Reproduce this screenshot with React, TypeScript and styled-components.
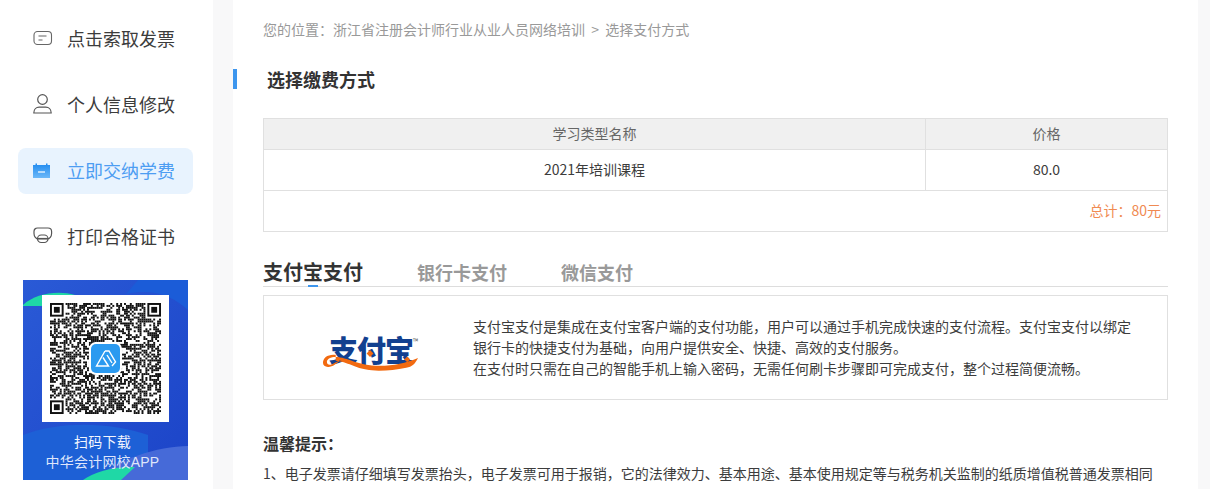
import React from "react";
import styled, { createGlobalStyle } from "styled-components";

const GlobalStyle = createGlobalStyle`
  html, body {
    margin: 0;
    padding: 0;
    height: 489px;
    overflow: hidden;
    background: #f8f8f9;
    font-family: "Noto Sans CJK SC", "Liberation Sans", sans-serif;
    color: #333;
  }
  * { box-sizing: border-box; }
`;

// pseudo random modules for the qr code, fixed seed so it stays the same
const QR_SIZE = 57;
const inFinder = (x: number, y: number) =>
  (x < 8 && y < 8) || (x >= QR_SIZE - 8 && y < 8) || (x < 8 && y >= QR_SIZE - 8);
const qrCells: [number, number][] = [];
let seed = 20211;
for (let y = 0; y < QR_SIZE; y++) {
  for (let x = 0; x < QR_SIZE; x++) {
    seed = (seed * 1103515245 + 12345) & 0x7fffffff;
    if (!inFinder(x, y) && (seed >> 16) % 100 < 56) qrCells.push([x, y]);
  }
}

const InvoiceIcon = () => (
  <svg width="20" height="16" viewBox="0 0 20 16" fill="none" stroke="#666" strokeWidth="1.1">
    <rect x="1" y="1.5" width="17.5" height="13" rx="3.5" />
    <path d="M5.5 6h8M5.5 10h4" />
  </svg>
);

const UserIcon = () => (
  <svg width="20" height="20" viewBox="0 0 20 20" fill="none" stroke="#555" strokeWidth="1.2">
    <circle cx="9.5" cy="5.500" r="4.800" />
    <path d="M0.800 19c0-3.800 2.600-5.800 5.400-5.800h6.600c2.800 0 5.400 2 5.400 5.800z" />
  </svg>
);

const PayIcon = () => (
  <svg width="20" height="18" viewBox="0 0 20 18">
    <defs>
      <linearGradient id="payFill" x1="0" y1="0" x2="0" y2="1">
        <stop offset="0" stopColor="#1f8af0" />
        <stop offset="1" stopColor="#6cb8f8" />
      </linearGradient>
    </defs>
    <path d="M0 4h2.500V2.500h1.500V4h9V2.500h1.500V4H17v13H0z" fill="url(#payFill)" />
    <path d="M5 11h7" stroke="#fff" strokeWidth="1.2" />
  </svg>
);

const CertIcon = () => (
  <svg width="20" height="18" viewBox="0 0 20 18" fill="none" stroke="#555" strokeWidth="1.2">
    <path d="M4.500 1h10.500c2 0 3.600 1.500 3.600 3.500v2c0 3-2 5.500-4.500 5.500H5.500C3 12 1 9.500 1 6.500v-2C1 2.500 2.500 1 4.500 1z" />
    <rect x="4.500" y="8" width="10.500" height="7.500" rx="3.700" />
    <path d="M4.700 11.500h10" />
  </svg>
);

const NAV = [
  { label: "点击索取发票", icon: <InvoiceIcon /> },
  { label: "个人信息修改", icon: <UserIcon /> },
  { label: "立即交纳学费", icon: <PayIcon />, active: true },
  { label: "打印合格证书", icon: <CertIcon /> },
];

export default function App() {
  return (
    <>
      <GlobalStyle />
      <Page>
        <Sidebar>
          {NAV.map((item) => (
            <NavItem key={item.label} $active={item.active}>
              <NavIcon>{item.icon}</NavIcon>
              {item.label}
            </NavItem>
          ))}
          <Banner>
            <BannerArt viewBox="0 0 165 200" preserveAspectRatio="none">
              <defs>
                <linearGradient id="bannerBg" x1="0" y1="0" x2="1" y2="1">
                  <stop offset="0" stopColor="#2a5ad6" />
                  <stop offset="1" stopColor="#1c44c8" />
                </linearGradient>
              </defs>
              <rect width="165" height="200" fill="url(#bannerBg)" />
              <path d="M115 0h50v30c-15-14-35-22-62-16z" fill="#1b5cd8" />
              <path d="M0 25C12 14 34 10 52 15L40 26H0z" fill="#1fd8a6" />
              <path d="M0 155c40-15 90-12 125 0v45H0z" fill="#1d60d6" />
              <path d="M165 166c-30 0-72 14-95 34h95z" fill="#466ad8" />
              <path d="M60 200c10-8 32-14 52-13l-14 13z" fill="#1fd8a6" />
            </BannerArt>
            <QrCard>
              <QrCode viewBox={`0 0 ${QR_SIZE} ${QR_SIZE}`}>
                {qrCells.map(([x, y]) => (
                  <rect key={`${x}-${y}`} x={x} y={y} width="1" height="1" fill="#111" />
                ))}
                {[
                  [0, 0],
                  [QR_SIZE - 7, 0],
                  [0, QR_SIZE - 7],
                ].map(([x, y]) => (
                  <g key={`${x}-${y}`}>
                    <rect x={x} y={y} width="7" height="7" fill="#111" />
                    <rect x={x + 1} y={y + 1} width="5" height="5" fill="#fff" />
                    <rect x={x + 2} y={y + 2} width="3" height="3" fill="#111" />
                  </g>
                ))}
              </QrCode>
              <QrLogo>
                <svg width="22" height="20" viewBox="0 0 22 20" fill="none" stroke="#fff" strokeWidth="1.4">
                  <path d="M10 2L1.500 17h12L8 8.500" />
                  <path d="M10 2h4l6.500 11-3.500 4" />
                  <path d="M12 6l5 8" />
                </svg>
              </QrLogo>
            </QrCard>
            <BannerText>
              <BannerTitle>扫码下载</BannerTitle>
              <span>中华会计网校APP</span>
            </BannerText>
          </Banner>
        </Sidebar>

        <Main>
          <Breadcrumb>您的位置：浙江省注册会计师行业从业人员网络培训&nbsp;&nbsp;&gt;&nbsp;&nbsp;选择支付方式</Breadcrumb>
          <Title>选择缴费方式</Title>

          <FeeTable>
            <thead>
              <tr>
                <HeadCell>学习类型名称</HeadCell>
                <HeadCell $price>价格</HeadCell>
              </tr>
            </thead>
            <tbody>
              <tr>
                <BodyCell>2021年培训课程</BodyCell>
                <BodyCell $price>80.0</BodyCell>
              </tr>
              <tr>
                <TotalCell colSpan={2}>总计：80元</TotalCell>
              </tr>
            </tbody>
          </FeeTable>

          <Tabs>
            <Tab $active>支付宝支付</Tab>
            <Tab>银行卡支付</Tab>
            <Tab>微信支付</Tab>
          </Tabs>

          <PayBox>
            <LogoWrap>
              <LogoText>支付宝</LogoText>
              <LogoTm>™</LogoTm>
              <LogoSwoosh viewBox="0 0 100 40">
                <path d="M49 16l3.500 3.500-3.500 3.500-3.500-3.500z" fill="#f26a10" />
                <path d="M87 22.500l3 3-3 3-3-3z" fill="#f26a10" />
                <path
                  d="M14 21C6 20 1 24 1 29c0 3 3 5 7 4 5-1 8-5 12-7-5 1-9 5-12 5-2 0-3-1-3-3 0-3 4-5 9-5 12 0 22 9 45 9 14 0 27-3 39-8-3 6-6 9-12 10-10 2-18 3-28 3-20 0-26-6-38-9-2 0-4-1-6-1z"
                  fill="#f26a10"
                />
              </LogoSwoosh>
            </LogoWrap>
            <PayText>
              <p>支付宝支付是集成在支付宝客户端的支付功能，用户可以通过手机完成快速的支付流程。支付宝支付以绑定银行卡的快捷支付为基础，向用户提供安全、快捷、高效的支付服务。</p>
              <p>在支付时只需在自己的智能手机上输入密码，无需任何刷卡步骤即可完成支付，整个过程简便流畅。</p>
            </PayText>
          </PayBox>

          <TipTitle>温馨提示：</TipTitle>
          <TipLine>1、电子发票请仔细填写发票抬头，电子发票可用于报销，它的法律效力、基本用途、基本使用规定等与税务机关监制的纸质增值税普通发票相同</TipLine>
        </Main>
      </Page>
    </>
  );
}

const Page = styled.div`
  display: flex;
  width: 1210px;
  height: 489px;
  overflow: hidden;
`;

const Sidebar = styled.aside`
  flex: 0 0 213px;
  height: 489px;
  padding: 16px 20px 0 18px;
  background: #fff;
  display: flex;
  flex-direction: column;
  gap: 20px;
`;

const NavItem = styled.div<{ $active?: boolean }>`
  flex: 0 0 46px;
  width: 175px;
  display: flex;
  align-items: center;
  padding: 0 0 2px 15px;
  font-size: 18px;
  border-radius: 8px;
  color: ${({ $active }) => ($active ? "#4d9df2" : "#3c3c3c")};
  background: ${({ $active }) => ($active ? "#e8f3fe" : "transparent")};
`;

const NavIcon = styled.span`
  display: flex;
  width: 34px;
  align-items: center;
`;

const Banner = styled.div`
  position: relative;
  width: 165px;
  height: 200px;
  margin-left: 5px;
  flex: none;
  overflow: hidden;
  padding-top: 15px;
  display: flex;
  flex-direction: column;
  align-items: center;
`;

const BannerArt = styled.svg`
  position: absolute;
  inset: 0;
  width: 100%;
  height: 100%;
`;

const QrCard = styled.div`
  position: relative;
  width: 127px;
  height: 127px;
  padding: 8px;
  background: #fff;
`;

const QrCode = styled.svg`
  display: block;
  width: 111px;
  height: 111px;
  filter: blur(0.3px);
`;

const QrLogo = styled.div`
  position: absolute;
  left: 49px;
  top: 49px;
  width: 29px;
  height: 29px;
  border-radius: 5px;
  background: #2b9af0;
  box-shadow: 0 0 0 2px #fff;
  display: flex;
  align-items: center;
  justify-content: center;
`;

const BannerText = styled.div`
  position: relative;
  margin: 10px 6px 0 0;
  display: flex;
  flex-direction: column;
  align-items: center;
  font-family: "Liberation Sans", "Noto Sans CJK SC", sans-serif;
  font-size: 14px;
  line-height: 20px;
  letter-spacing: 0.2px;
  color: #dfe6fb;
`;

const BannerTitle = styled.span`
  color: #f2f5fe;
`;

const Main = styled.main`
  flex: 0 0 965px;
  margin-left: 20px;
  height: 489px;
  background: #fff;
  padding: 19px 30px 0;
  position: relative;
`;

const Breadcrumb = styled.div`
  font-size: 14px;
  line-height: 20px;
  color: #999;
`;

const Title = styled.h2`
  margin: 30px 0 0 -30px;
  height: 20px;
  padding-left: 30px;
  border-left: 4px solid #3d96ee;
  font-size: 18px;
  line-height: 20px;
  font-weight: 700;
  color: #333;
`;

const FeeTable = styled.table`
  margin-top: 29px;
  width: 905px;
  border-collapse: collapse;
  table-layout: fixed;
  font-size: 14px;
  color: #3c3c3c;
`;

const HeadCell = styled.th<{ $price?: boolean }>`
  height: 31px;
  width: ${({ $price }) => ($price ? "242px" : "auto")};
  padding: 0 0 2px;
  background: #f0f0f0;
  border: 1px solid #e0e0e0;
  font-weight: 400;
  color: #666;
`;

const BodyCell = styled.td<{ $price?: boolean }>`
  height: 41px;
  width: ${({ $price }) => ($price ? "242px" : "auto")};
  padding: 0 0 2px;
  border: 1px solid #e0e0e0;
  text-align: center;
`;

const TotalCell = styled.td`
  height: 41px;
  padding: 0 6px 2px 0;
  border: 1px solid #e0e0e0;
  text-align: right;
  color: #f08a52;
`;

const Tabs = styled.div`
  margin-top: 26px;
  height: 29px;
  display: flex;
  align-items: center;
  gap: 54px;
  border-bottom: 1px solid #ddd;
  width: 905px;
`;

const Tab = styled.div<{ $active?: boolean }>`
  position: relative;
  font-size: ${({ $active }) => ($active ? "20px" : "18px")};
  line-height: 28px;
  font-weight: 700;
  color: ${({ $active }) => ($active ? "#333" : "#999")};

  &::after {
    content: "";
    display: ${({ $active }) => ($active ? "block" : "none")};
    position: absolute;
    left: 45px;
    bottom: -1px;
    width: 10px;
    height: 2px;
    background: #3d96ee;
  }
`;

const PayBox = styled.div`
  margin-top: 8px;
  width: 905px;
  height: 105px;
  border: 1px solid #e0e0e0;
  display: flex;
  align-items: center;
  padding-left: 58px;
`;

const LogoWrap = styled.div`
  position: relative;
  flex: 0 0 151px;
  height: 50px;
`;

const LogoText = styled.span`
  position: absolute;
  left: 7px;
  top: 9px;
  font-size: 29px;
  line-height: 34px;
  font-weight: 900;
  letter-spacing: -1px;
  color: #12408f;
`;

const LogoTm = styled.span`
  position: absolute;
  left: 91px;
  top: 14px;
  font-size: 7px;
  line-height: 8px;
  color: #555;
`;

const LogoSwoosh = styled.svg`
  position: absolute;
  left: 0;
  top: 11px;
  width: 98px;
  height: 40px;
`;

const PayText = styled.div`
  width: 660px;
  font-size: 14px;
  line-height: 21px;
  color: #3c3c3c;

  p {
    margin: 0;
  }
`;

const TipTitle = styled.div`
  margin-top: 32px;
  font-size: 16px;
  line-height: 22px;
  font-weight: 700;
  color: #333;
`;

const TipLine = styled.div`
  margin-top: 7px;
  width: 905px;
  font-size: 14px;
  line-height: 24px;
  color: #3c3c3c;
`;
